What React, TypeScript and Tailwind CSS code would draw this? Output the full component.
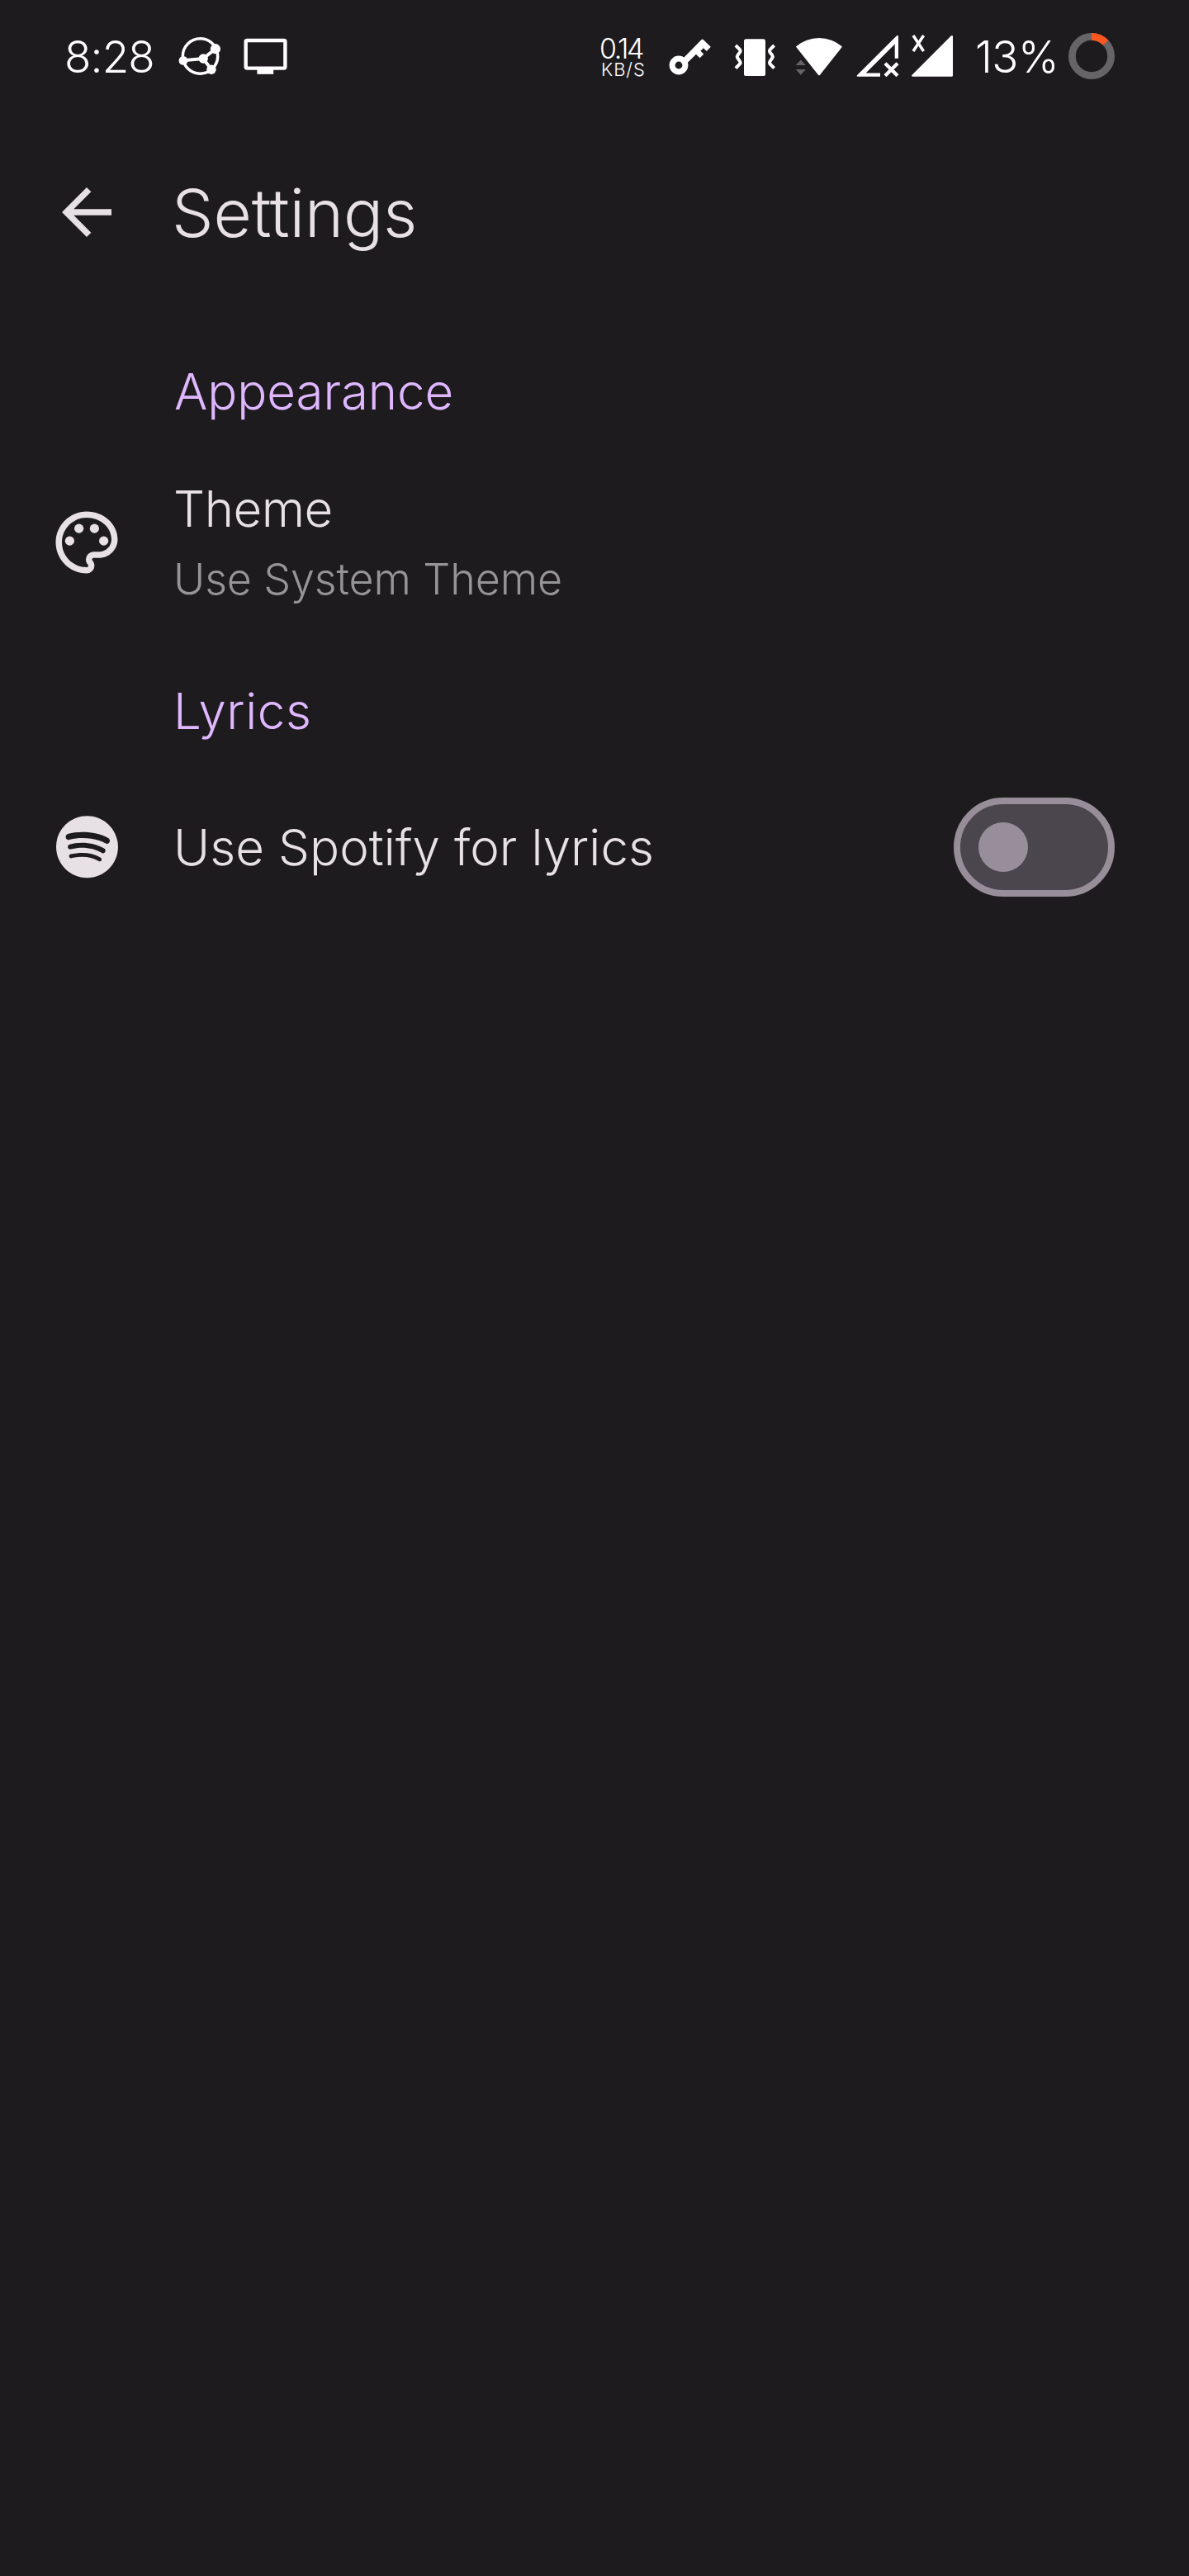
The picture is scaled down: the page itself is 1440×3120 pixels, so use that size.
import type { ReactNode } from "react";
import { FaSpotify } from "react-icons/fa";

function ShareGlobeIcon() {
  return (
    <svg className="ml-[37px] h-14 w-[54px] shrink-0" viewBox="215 40 54 56" fill="none">
      <circle cx="242.5" cy="68" r="21.2" stroke="white" strokeWidth="3.5" />
      <path d="M222 73.3 246 71 260.7 59.3M246 71 256 84" stroke="white" strokeWidth="4" />
      <g fill="white">
        <circle cx="222" cy="73.4" r="5.4" />
        <circle cx="246.2" cy="71" r="5.7" />
        <circle cx="260.9" cy="59.2" r="6.1" />
        <circle cx="256" cy="84.2" r="5.7" />
      </g>
    </svg>
  );
}

function MonitorIcon() {
  return (
    <svg className="ml-[25px] h-14 w-[56px] shrink-0" viewBox="294 40 56 56" fill="none">
      <rect x="297.7" y="49" width="47.7" height="33.6" rx="1.5" stroke="white" strokeWidth="4.4" />
      <path d="M311.4 83h19.8v6.8h-19.8z" fill="white" />
    </svg>
  );
}

function KeyIcon() {
  return (
    <svg className="h-14 w-[56px] shrink-0" viewBox="808 40 56 56" fill="white">
      <circle cx="822" cy="79" r="7.9" fill="none" stroke="white" strokeWidth="7" />
      <path d="M826.5 71.5 849.6 47.9q1.1-1 2.2 0l9 8.8-5 5.3-3.9-3.7-3.5 3.4 3.9 3.8-4.7 4.8-4.6-4.6-11.4 11.4z" />
    </svg>
  );
}

function VibrateIcon() {
  return (
    <svg className="ml-6 h-14 w-[52px] shrink-0" viewBox="888 40 52 56" fill="none">
      <rect x="901" y="47.3" width="26" height="44.7" rx="2.6" fill="white" />
      <path
        d="m891 55 4.8 4.8q1.4 1.7.4 3.3l-2.8 3.8q-1.1 1.7 0 3.4l2.8 4.2q1 1.6-.4 3.2L891 82.6M937.6 55l-4.8 4.8q-1.4 1.7-.4 3.3l2.8 3.8q1.1 1.7 0 3.4l-2.8 4.2q-1 1.6.4 3.2l4.8 4.9"
        stroke="white"
        strokeWidth="4"
      />
    </svg>
  );
}

function WifiIcon() {
  return (
    <svg className="ml-[22px] h-14 w-[60px] shrink-0" viewBox="962 40 60 56">
      <path d="M963.9 56.6A42.6 42.6 0 0 1 1020 56.6L993 90.7q-1 1.2-2 0z" fill="white" />
      <path d="M969.8 72.4 975.8 79h-12zM963.8 84h12l-6 6.8z" fill="#666466" />
    </svg>
  );
}

function NoSignalIcon() {
  return (
    <svg className="ml-[14px] h-14 w-[54px] shrink-0" viewBox="1036 40 54 56">
      <path d="M1038.3 92.7q-1.4-.6-.2-1.8L1086 43.3q1.5-.8 2 .2V70.7h-4.3V53.4L1048.6 88.4H1066v4.3z" fill="white" />
      <path d="m1072 76.7 15 15M1087 76.7l-15 15" stroke="white" strokeWidth="4.3" />
    </svg>
  );
}

function SignalIcon() {
  return (
    <svg className="ml-[12px] h-14 w-[54px] shrink-0" viewBox="1102 40 54 56">
      <path d="M1105 92.7q-1.7-.6-.4-1.9L1152 43.3q1.6-.8 2 .4V91.2q0 1.5-1.5 1.5z" fill="white" />
      <path d="m1106 43 12.6 19M1118.6 43 1106 62" stroke="white" strokeWidth="3.5" />
    </svg>
  );
}

function BatteryRing() {
  return (
    <svg className="h-14 w-14 shrink-0" viewBox="0 0 56 56" fill="none">
      <circle cx="28" cy="28" r="23.6" stroke="#666466" strokeWidth="8.8" />
      <circle
        cx="28"
        cy="28"
        r="23.6"
        pathLength="100"
        strokeDasharray="13 100"
        transform="rotate(-90 28 28)"
        stroke="#fb5620"
        strokeWidth="8.8"
      />
    </svg>
  );
}

function PaletteIcon() {
  return (
    <svg className="size-[90px]" viewBox="0 0 24 24" fill="currentColor">
      <path d="M12 22C6.49 22 2 17.51 2 12S6.49 2 12 2s10 4.04 10 9c0 3.31-2.69 6-6 6h-1.77c-.28 0-.5.22-.5.5 0 .12.05.23.13.33.41.47.64 1.06.64 1.67A2.5 2.5 0 0 1 12 22zm0-18c-4.41 0-8 3.59-8 8s3.59 8 8 8c.28 0 .5-.22.5-.5a.54.54 0 0 0-.14-.35c-.41-.46-.63-1.05-.63-1.65a2.5 2.5 0 0 1 2.5-2.5H16c2.21 0 4-1.79 4-4 0-3.86-3.59-7-8-7z" />
      <circle cx="6.5" cy="11.5" r="1.5" />
      <circle cx="9.5" cy="7.5" r="1.5" />
      <circle cx="14.5" cy="7.5" r="1.5" />
      <circle cx="17.5" cy="11.5" r="1.5" />
    </svg>
  );
}

function StatusBar() {
  return (
    <div className="flex h-[137px] items-start justify-between pt-10 pr-[90px] pl-[78px] text-white">
      <div className="flex h-14 items-center">
        <span className="w-[100px] pt-[2px] text-[53px] leading-14 tracking-[-0.86px] whitespace-nowrap">8:28</span>
        <ShareGlobeIcon />
        <MonitorIcon />
      </div>
      <div className="flex h-14 items-center">
        <div className="flex h-14 w-[80px] flex-col pt-[5.5px] whitespace-nowrap">
          <span className="-ml-[2px] text-[34px] leading-[26px] tracking-[-2.39px]">0.14</span>
          <span className="mt-[2px] text-[22px] leading-5 tracking-[0.9px]">KB/S</span>
        </div>
        <KeyIcon />
        <VibrateIcon />
        <WifiIcon />
        <NoSignalIcon />
        <SignalIcon />
        <span className="ml-[25px] w-[113px] pt-[2px] text-[53px] leading-14 tracking-[-0.49px] whitespace-nowrap">13%</span>
        <BatteryRing />
      </div>
    </div>
  );
}

function SectionTitle({ children }: { children: ReactNode }) {
  return <h2 className="pl-[210px] text-[60px] leading-[90px] text-[#dfb7ff]">{children}</h2>;
}

function Toggle() {
  return (
    <button
      role="switch"
      aria-checked="false"
      aria-label="Use Spotify for lyrics"
      className="flex h-[120px] w-[195px] items-center rounded-full border-8 border-[#978e99] bg-[#4b454d] pl-[22px]"
    >
      <span className="size-[60px] rounded-full bg-[#978e99]" />
    </button>
  );
}

export default function App() {
  return (
    <div className="h-[3120px] w-[1440px] overflow-hidden bg-[#1e1b1e] font-['Inter',sans-serif] font-light text-[#e7e0e5]">
      <StatusBar />
      <header className="flex h-[240px] items-center pl-[60px]">
        <button aria-label="Back" className="size-[90px]">
          <svg className="size-[90px]" viewBox="0 0 24 24" fill="currentColor">
            <path d="M20 11H7.83l5.59-5.59L12 4l-8 8 8 8 1.41-1.41L7.83 13H20v-2z" />
          </svg>
        </button>
        <h1 className="ml-[58px] pt-px text-[80px] leading-[100px] tracking-[-0.1px]">Settings</h1>
      </header>

      <section className="pt-[52px]">
        <SectionTitle>
          <span className="pl-px tracking-[-0.1px]">Appearance</span>
        </SectionTitle>
        <div className="flex h-[276px] items-center pl-[60px]">
          <PaletteIcon />
          <div className="ml-[60px] flex flex-col gap-2 pb-0.5">
            <span className="text-[60px] leading-[84px] tracking-[-0.5px]">Theme</span>
            <span className="text-[52px] leading-[72px] tracking-[-0.13px] text-[#969596]">Use System Theme</span>
          </div>
        </div>
      </section>

      <section className="pt-[21px]">
        <SectionTitle>
          <span className="tracking-[0.6px]">Lyrics</span>
        </SectionTitle>
        <div className="flex h-[240px] items-center pr-[90px] pl-[60px]">
          <div className="flex size-[90px] items-center justify-center">
            <FaSpotify className="h-[77.4px] w-[75px]" />
          </div>
          <span className="ml-[60px] flex-1 text-[60px] leading-[90px] tracking-[0.06px]">Use Spotify for lyrics</span>
          <Toggle />
        </div>
      </section>
    </div>
  );
}
